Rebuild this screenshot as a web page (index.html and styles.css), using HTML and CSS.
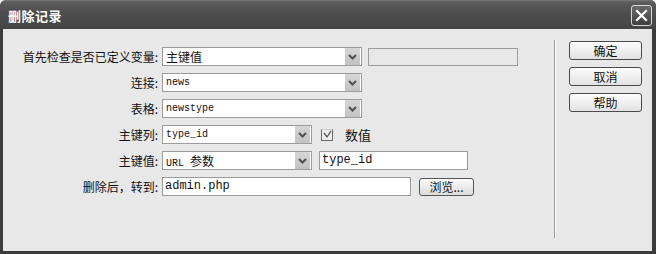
FILE: index.html
```html
<!DOCTYPE html>
<html lang="zh-CN">

<head>
    <meta charset="UTF-8">
    <title>删除记录</title>
    <link rel="stylesheet" href="styles.css">
</head>

<body>
    <div class="window">
        <div class="titlebar">
            <span class="title">删除记录</span>
            <span class="close">
                <svg width="13" height="13" viewBox="0 0 13 13">
                    <path d="M2 2 L11 11 M11 2 L2 11" stroke="#fff" stroke-width="2.2" stroke-linecap="square" />
                </svg>
            </span>
        </div>

        <div class="content">
            <div class="form">
                <label class="label">首先检查是否已定义变量:</label>
                <div class="controls">
                    <div class="select wide"><span class="cjk">主键值</span><span class="arrow"></span></div>
                    <div class="textbox disabled"></div>
                </div>

                <label class="label">连接:</label>
                <div class="controls">
                    <div class="select wide"><span>news</span><span class="arrow"></span></div>
                </div>

                <label class="label">表格:</label>
                <div class="controls">
                    <div class="select wide"><span>newstype</span><span class="arrow"></span></div>
                </div>

                <label class="label">主键列:</label>
                <div class="controls">
                    <div class="select narrow"><span>type_id</span><span class="arrow"></span></div>
                    <span class="check">
                        <svg width="9" height="9" viewBox="0 0 9 9">
                            <path d="M1 3 L4 7 L8 1" stroke="#555" stroke-width="1.3" fill="none" />
                        </svg>
                    </span>
                    <span class="check-label">数值</span>
                </div>

                <label class="label">主键值:</label>
                <div class="controls">
                    <div class="select narrow"><span>URL <span class="cjk">参数</span></span><span class="arrow"></span></div>
                    <div class="textbox value">type_id</div>
                </div>

                <label class="label">删除后，转到:</label>
                <div class="controls">
                    <div class="textbox url">admin.php</div>
                    <button class="browse">浏览...</button>
                </div>
            </div>

            <div class="divider"></div>

            <div class="actions">
                <button class="btn">确定</button>
                <button class="btn">取消</button>
                <button class="btn">帮助</button>
            </div>
        </div>
    </div>
</body>

</html>
```

FILE: styles.css
```css
body {
    margin: 0;
    font-family: "Noto Sans CJK SC", "Liberation Sans", sans-serif;
    font-size: 12px;
    color: #111;
    background-color: #fff;
}

.window {
    width: 656px;
    height: 254px;
    box-sizing: border-box;
    display: flex;
    flex-direction: column;
    background-color: #3c3c3c;
    border-radius: 6px 6px 0 0;
    overflow: hidden;
}

.titlebar {
    height: 29px;
    flex-shrink: 0;
    display: flex;
    align-items: center;
    justify-content: space-between;
    padding: 0 4px 0 8px;
    background: linear-gradient(#7a7a7a 0, #5c5c5c 2px, #4e4e4e 12px, #444 100%);
}

.title {
    color: #fff;
    font-size: 13px;
    font-weight: bold;
    letter-spacing: 0.5px;
    margin-top: 1px;
}

.close {
    width: 19px;
    height: 19px;
    display: flex;
    align-items: center;
    justify-content: center;
    border: 1px solid #d8d8d8;
    border-radius: 3px;
    background: linear-gradient(#6a6a6a, #3e3e3e);
    margin-top: 2px;
}

.content {
    flex: 1;
    display: flex;
    background-color: #e8e8e8;
    margin: 0 4px 3px 3px;
}

.form {
    width: 551px;
    display: grid;
    grid-template-columns: 155px 1fr;
    column-gap: 4px;
    row-gap: 7px;
    align-content: start;
    padding-top: 18px;
}

.label {
    text-align: right;
    line-height: 19px;
    white-space: nowrap;
}

.controls {
    display: flex;
    align-items: center;
    height: 19px;
}

.select {
    height: 19px;
    box-sizing: border-box;
    display: flex;
    align-items: center;
    justify-content: space-between;
    border: 1px solid #9c9c9c;
    background-color: #fff;
    padding-left: 3px;
    font-family: "Liberation Mono", monospace;
    font-size: 10px;
}

.select .cjk {
    font-family: "Noto Sans CJK SC", sans-serif;
    font-size: 12px;
}

.wide {
    width: 200px;
}

.narrow {
    width: 150px;
}

.arrow {
    width: 15px;
    height: 17px;
    margin-right: 1px;
    background:
        url("data:image/svg+xml;utf8,<svg xmlns='http://www.w3.org/2000/svg' width='15' height='17'><path d='M4 7 L7.5 10.5 L11 7' stroke='%23505050' stroke-width='2' fill='none'/></svg>") no-repeat center,
        linear-gradient(#d6d6d6, #c2c2c2);
}

.textbox {
    height: 19px;
    box-sizing: border-box;
    border: 1px solid #9c9c9c;
    background-color: #fff;
    font-family: "Liberation Mono", monospace;
    font-size: 12px;
    line-height: 17px;
    padding-left: 2px;
}

.disabled {
    width: 150px;
    margin-left: 6px;
    height: 18px;
    background-color: #e8e8e8;
}

.value {
    width: 149px;
    margin-left: 7px;
}

.url {
    width: 249px;
}

.check {
    width: 10px;
    height: 10px;
    margin-left: 9px;
    display: flex;
    align-items: center;
    justify-content: center;
    border: 1px solid #6a6a6a;
    border-top-color: #d0d0d0;
    background-color: #ececec;
}

.check-label {
    margin-left: 12px;
    font-size: 13px;
}

.browse {
    width: 55px;
    height: 18px;
    margin-left: 8px;
    padding: 0;
    border: 1px solid #555;
    border-radius: 3px;
    background: linear-gradient(#fafafa, #dcdcdc);
    font-family: "Noto Sans CJK SC", sans-serif;
    font-size: 12px;
    line-height: 14px;
    color: #111;
}

.divider {
    width: 1px;
    margin: 11px 0 13px;
    background-color: #9a9a9a;
    box-shadow: 1px 0 0 #fafafa;
}

.actions {
    display: flex;
    flex-direction: column;
    gap: 7px;
    padding: 12px 0 0 14px;
}

.btn {
    width: 73px;
    height: 19px;
    padding: 0;
    border: 1px solid #4a4a4a;
    border-radius: 3px;
    background: linear-gradient(#fdfdfd, #e2e2e2);
    font-family: "Noto Sans CJK SC", sans-serif;
    font-size: 12px;
    line-height: 15px;
    color: #111;
}
```
